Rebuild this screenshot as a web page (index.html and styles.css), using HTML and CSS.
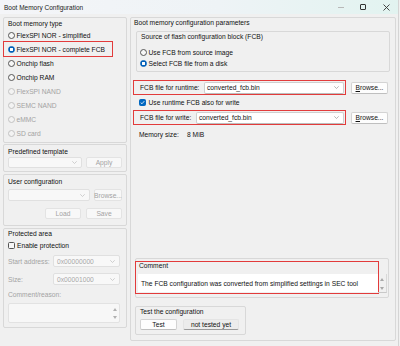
FILE: index.html
```html
<!DOCTYPE html>
<html>
<head>
<meta charset="utf-8">
<link rel="stylesheet" href="styles.css">
</head>
<body>
<div class="window">
  <div class="titlebar">
    <span class="wtitle">Boot Memory Configuration</span>
    <div class="controls">
      <span class="ctl-min"></span>
      <span class="ctl-max"></span>
      <svg class="ctl-close" width="7" height="7" viewBox="0 0 7 7"><path d="M0.5 0.5L6.5 6.5M6.5 0.5L0.5 6.5" stroke="#333" stroke-width="0.9"/></svg>
    </div>
  </div>
  <div class="content">
    <div class="left">
      <div class="group g-type">
        <div class="gtitle t9">Boot memory type</div>
        <div class="opt"><span class="radio"></span>FlexSPI NOR - simplified</div>
        <div class="opt hl-radio"><span class="radio on"></span>FlexSPI NOR - complete FCB</div>
        <div class="opt"><span class="radio"></span>Onchip flash</div>
        <div class="opt"><span class="radio"></span>Onchip RAM</div>
        <div class="opt dis"><span class="radio"></span>FlexSPI NAND</div>
        <div class="opt dis"><span class="radio"></span>SEMC NAND</div>
        <div class="opt dis"><span class="radio"></span>eMMC</div>
        <div class="opt dis"><span class="radio"></span>SD card</div>
      </div>
      <div class="group g-tpl">
        <div class="gtitle">Predefined template</div>
        <div class="ctl-row r-tpl">
          <div class="combo dis c-tpl"><svg class="chev" width="5" height="3" viewBox="0 0 5 3"><path d="M0.3 0.3L2.5 2.5L4.7 0.3" fill="none" stroke="#bdbdbd" stroke-width="0.7"/></svg></div>
          <span class="btn dis b-apply">Apply</span>
        </div>
      </div>
      <div class="group g-user">
        <div class="gtitle">User configuration</div>
        <div class="ctl-row r-user">
          <div class="combo dis c-user"><svg class="chev" width="5" height="3" viewBox="0 0 5 3"><path d="M0.3 0.3L2.5 2.5L4.7 0.3" fill="none" stroke="#bdbdbd" stroke-width="0.7"/></svg></div>
          <span class="btn dis b-ubrowse">Browse...</span>
        </div>
        <div class="ctl-row r-load">
          <span class="btn dis b-load">Load</span>
          <span class="btn dis b-save">Save</span>
        </div>
      </div>
      <div class="group g-prot">
        <div class="gtitle">Protected area</div>
        <div class="chk-row"><span class="chk"></span>Enable protection</div>
        <div class="field-row r-start">
          <span class="flab dis">Start address:</span>
          <div class="combo dis c-field">0x00000000<svg class="chev" width="5" height="3" viewBox="0 0 5 3"><path d="M0.3 0.3L2.5 2.5L4.7 0.3" fill="none" stroke="#bdbdbd" stroke-width="0.7"/></svg></div>
        </div>
        <div class="field-row r-size">
          <span class="flab dis">Size:</span>
          <div class="combo dis c-field">0x00001000<svg class="chev" width="5" height="3" viewBox="0 0 5 3"><path d="M0.3 0.3L2.5 2.5L4.7 0.3" fill="none" stroke="#bdbdbd" stroke-width="0.7"/></svg></div>
        </div>
        <div class="plain-lab dis">Comment/reason:</div>
        <div class="tarea">
          <div class="tarrows">
            <svg width="4" height="3" viewBox="0 0 4 3"><path d="M0 3L2 0L4 3Z" fill="#b0b0b0"/></svg>
            <svg width="4" height="3" viewBox="0 0 4 3"><path d="M0 0L2 3L4 0Z" fill="#b0b0b0"/></svg>
          </div>
        </div>
      </div>
    </div>
    <div class="right">
      <div class="ptitle">Boot memory configuration parameters</div>
      <div class="group g-src">
        <div class="gtitle t9 src-title">Source of flash configuration block (FCB)</div>
        <div class="sopt sopt1"><span class="radio"></span>Use FCB from source image</div>
        <div class="sopt"><span class="radio on"></span>Select FCB file from a disk</div>
      </div>
      <div class="file-line fl1">
        <div class="file-row">
          <span class="file-lab">FCB file for runtime:</span>
          <div class="combo c-run">converted_fcb.bin<svg class="chev" width="5" height="3" viewBox="0 0 5 3"><path d="M0.3 0.3L2.5 2.5L4.7 0.3" fill="none" stroke="#9a9a9a" stroke-width="0.7"/></svg></div>
        </div>
        <span class="btn b-browse"><u>B</u>rowse...</span>
      </div>
      <div class="chk-row use-row"><span class="chk on"><svg width="5" height="5" viewBox="0 0 5 5"><path d="M0.7 2.6L2 3.8L4.3 1.1" fill="none" stroke="#fff" stroke-width="0.8"/></svg></span>Use runtime FCB also for write</div>
      <div class="file-line fl2">
        <div class="file-row">
          <span class="file-lab">FCB file for write:</span>
          <div class="combo c-write">converted_fcb.bin<svg class="chev" width="5" height="3" viewBox="0 0 5 3"><path d="M0.3 0.3L2.5 2.5L4.7 0.3" fill="none" stroke="#9a9a9a" stroke-width="0.7"/></svg></div>
        </div>
        <span class="btn b-browse"><u>B</u>rowse...</span>
      </div>
      <div class="mem-row"><span class="mem-lab">Memory size:</span><span>8 MiB</span></div>
      <div class="spacer"></div>
      <div class="group g-comment">
        <div class="comment-wrap">
          <div class="ctitle">Comment</div>
          <div class="ctext">The FCB configuration was converted from simplified settings in SEC tool</div>
        </div>
        <div class="cscroll">
          <svg width="4" height="3" viewBox="0 0 4 3"><path d="M0 3L2 0L4 3Z" fill="#a8a8a8"/></svg>
          <svg width="4" height="3" viewBox="0 0 4 3"><path d="M0 0L2 3L4 0Z" fill="#a8a8a8"/></svg>
        </div>
      </div>
      <div class="group g-test">
        <div class="gtitle">Test the configuration</div>
        <div class="ctl-row r-test">
          <span class="btn b-test">Test</span>
          <span class="btn b-status">not tested yet</span>
        </div>
      </div>
    </div>
  </div>
</div>
</body>
</html>
```
FILE: styles.css
```css
* { box-sizing: border-box; }
body {
  margin: 0;
  width: 400px;
  height: 346px;
  overflow: hidden;
  background: #f0f0f0;
  font-family: "Liberation Sans", Arial, sans-serif;
  font-size: 6.7px;
  color: #111;
}
.window {
  width: 399px;
  height: 346px;
  display: flex;
  flex-direction: column;
  border-right: 1px solid #d4d4d4;
}
.titlebar {
  height: 14px;
  flex: none;
  display: flex;
  align-items: center;
  padding-left: 4px;
  background: linear-gradient(90deg, #f4f5f8 0%, #eef3f6 55%, #e2f3f0 100%);
}
.wtitle { font-size: 6.5px; color: #222; }
.controls { margin-left: auto; display: flex; align-items: center; height: 14px; }
.ctl-min { width: 6px; height: 1px; background: #b8b8b8; margin-right: 16px; }
.ctl-max { width: 6px; height: 6px; border: 0.9px solid #333; border-radius: 1px; margin-right: 17px; }
.ctl-close { margin-right: 8px; display: block; }

.content {
  flex: 1;
  display: flex;
  gap: 3px;
  padding: 3px 2px 0 3px;
}
.left { width: 124px; display: flex; flex-direction: column; }
.group {
  border: 1px solid #d8d8d8;
  border-radius: 2px;
  display: flex;
  flex-direction: column;
}
.gtitle { height: 8px; line-height: 8px; padding-left: 4px; white-space: nowrap; }
.gtitle.t9 { height: 9px; line-height: 9px; }
.dis { color: #a3a3a3; }

/* radios and checkboxes */
.radio {
  width: 7px; height: 7px; flex: none;
  border: 0.9px solid #555;
  border-radius: 50%;
  background: #f7f7f7;
  margin-right: 1.5px;
}
.radio.on {
  border-color: #005fb8;
  background: radial-gradient(circle, #ffffff 0 1.4px, #005fb8 1.8px);
}
.dis .radio { border-color: #c2c2c2; background: #f3f3f3; }
.chk {
  width: 7px; height: 7px; flex: none;
  border: 0.9px solid #555;
  border-radius: 1.5px;
  background: #f7f7f7;
  margin-right: 2px;
  display: flex; align-items: center; justify-content: center;
}
.chk.on { background: #0067c0; border-color: #0067c0; }
.chk svg { display: block; }

/* group 1 */
.g-type { height: 126px; padding: 1px 0 2px; }
.opt { height: 14px; display: flex; align-items: center; padding-left: 4px; white-space: nowrap; }
.hl-radio { width: 108px; outline: 1.5px solid #e23b3b; outline-offset: -0.5px; }

/* controls */
.combo {
  position: relative;
  background: #fff;
  border: 1px solid #cfcfcf;
  border-bottom-color: #bdbdbd;
  border-radius: 2px;
  display: flex; align-items: center;
  padding-left: 2px;
  white-space: nowrap;
}
.combo.dis { background: #f8f8f8; border-color: #e0e0e0; }
.chev { position: absolute; right: 4px; top: 50%; margin-top: -1.5px; display: block; }
.btn {
  display: flex; align-items: center; justify-content: center;
  background: #fdfdfd;
  border: 1px solid #d3d3d3;
  border-bottom-color: #bfbfbf;
  border-radius: 2px;
  white-space: nowrap;
}
.btn.dis { background: #f8f8f8; border-color: #e3e3e3; }
.ctl-row { display: flex; padding: 0 4px; }

/* group 2 */
.g-tpl { height: 28px; margin-top: 1px; padding: 3px 0; }
.r-tpl { margin-top: 1px; height: 11px; gap: 4px; }
.c-tpl { width: 74px; }
.b-apply { width: 36px; }

/* group 3 */
.g-user { height: 52px; margin-top: 2px; padding-top: 3px; }
.r-user { margin-top: 3px; height: 12px; gap: 4px; }
.c-user { width: 82px; }
.b-ubrowse { width: 28px; }
.r-load { margin-top: 7px; height: 11px; justify-content: flex-end; gap: 5px; }
.b-load, .b-save { width: 36px; }

/* group 4 */
.g-prot { height: 100px; margin-top: 2px; padding-top: 1px; }
.chk-row { height: 10px; display: flex; align-items: center; white-space: nowrap; }
.g-prot .chk-row { margin-top: 2px; padding-left: 4px; }
.field-row { display: flex; align-items: center; height: 12px; padding: 0 6px 0 4px; }
.r-start { margin-top: 5px; }
.r-size { margin-top: 6px; }
.c-field { margin-left: auto; width: 67px; height: 12px; color: #a8a8a8; padding-left: 3px; }
.plain-lab { height: 8px; line-height: 8px; margin-top: 6px; padding-left: 4px; }
.tarea {
  margin: 4px 6px 0 4px;
  height: 20px;
  background: #f7f7f7;
  border: 1px solid #e2e2e2;
  border-radius: 2px;
  display: flex; justify-content: flex-end;
}
.tarrows { width: 8px; display: flex; flex-direction: column; align-items: center; justify-content: space-between; padding: 4px 0 3px; }
.tarrows svg, .cscroll svg { display: block; }

/* right panel */
.right {
  width: 266px;
  height: 324px;
  border: 1px solid #d8d8d8;
  border-radius: 2px;
  padding: 0 5px 5px;
  display: flex;
  flex-direction: column;
}
.ptitle { height: 9px; line-height: 9px; margin-left: -2px; white-space: nowrap; }
.g-src { height: 41px; margin-top: 4px; padding-bottom: 2px; }
.src-title { padding-left: 4px; }
.sopt { height: 11px; display: flex; align-items: center; padding-left: 3px; white-space: nowrap; }
.sopt1 { margin-top: 6px; }
.file-line { display: flex; align-items: center; height: 13px; }
.fl1 { margin-top: 9px; }
.fl2 { margin-top: 4px; }
.file-row {
  margin-left: -2px;
  width: 211px;
  height: 13px;
  display: flex;
  align-items: center;
  outline: 1.5px solid #e23b3b;
  outline-offset: 0;
  padding-left: 6px;
  white-space: nowrap;
}
.combo.c-run { margin-left: auto; margin-right: 1px; width: 140px; height: 12px; }
.combo.c-write { margin-left: auto; margin-right: 1px; width: 148px; height: 12px; }
.b-browse { margin-left: 6px; width: 37px; height: 12px; }
.use-row { margin-top: 3px; padding-left: 3px; }
.use-row .chk { margin-right: 2.5px; }
.mem-row { margin-top: 5px; height: 10px; display: flex; align-items: center; padding-left: 3px; white-space: nowrap; }
.mem-lab { width: 48px; }
.spacer { flex: 1; }

.g-comment {
  height: 40px;
  margin-left: -1px;
  width: 254px;
  flex-direction: row;
  align-items: flex-start;
  padding-top: 3px;
}
.comment-wrap {
  width: 242px;
  height: 31px;
  outline: 1.5px solid #e23b3b;
  outline-offset: 0;
  padding: 0 0 1px 2px;
  display: flex;
  flex-direction: column;
}
.ctitle { height: 8px; line-height: 8px; padding-left: 1px; }
.ctext {
  margin-top: 4px;
  height: 18px;
  background: #fff;
  display: flex;
  align-items: center;
  padding-left: 3px;
  white-space: nowrap;
}
.cscroll {
  margin-top: 12px;
  width: 9px;
  height: 19px;
  border-right: 1px solid #d8d8d8;
  border-bottom: 1px solid #c8c8c8;
  display: flex;
  flex-direction: column;
  align-items: center;
  justify-content: space-between;
  padding: 4px 0 2px;
}
.g-test { margin-top: 8px; margin-left: -1px; width: 111px; height: 29px; padding-top: 1px; }
.r-test { margin-top: 3px; height: 11px; gap: 6px; }
.b-test { width: 37px; }
.b-status { width: 56px; background: #ececec; border-color: #e4e4e4; border-bottom: 1px solid #9a9a9a; }
```
